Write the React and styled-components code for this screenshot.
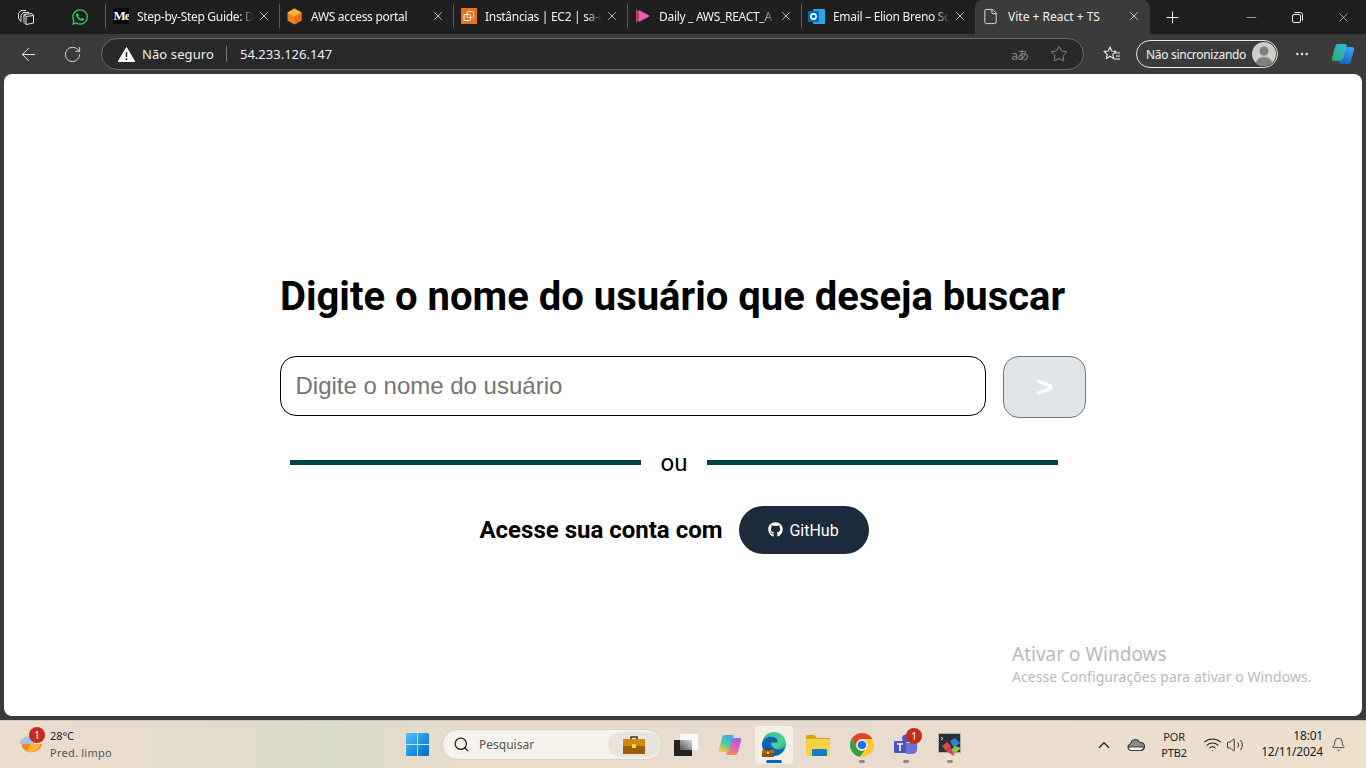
import React from "react";
import styled, { createGlobalStyle } from "styled-components";
import { FaGithub, FaWhatsapp } from "react-icons/fa";
import { ArrowLeft, RotateCw, Star, X, Plus, Minus, File, Search, Bell, ChevronUp, MoreHorizontal, Wifi, Volume2 } from "lucide-react";

const Global = createGlobalStyle`
  html, body { margin: 0; padding: 0; height: 100%; overflow: hidden; }
  #root { height: 100%; }
  * { box-sizing: border-box; }
`;

const UI = `"Noto Sans", "Open Sans", sans-serif`;

const Desktop = styled.div`
  width: 1366px;
  height: 768px;
  display: flex;
  flex-direction: column;
  background: #3b3b3b;
  font-family: ${UI};
  position: relative;
  overflow: hidden;
`;

const TabStrip = styled.div`
  height: 34px;
  background: #1f1f1f;
  display: flex;
  align-items: stretch;
  color: #fff;
`;

const StripIcon = styled.div`
  width: ${(p) => p.$w}px;
  padding-left: ${(p) => p.$pl || 0}px;
  display: flex;
  align-items: center;
  justify-content: center;
  flex: none;
`;

const TabSlot = styled.div`
  width: 174px;
  height: 24px;
  flex: none;
  align-self: center;
  margin-top: -2px;
  display: flex;
  align-items: center;
  padding: 0 8px 0 6px;
  border-left: 1px solid #5a5a5a;
`;

const ActiveTab = styled.div`
  width: 175px;
  flex: none;
  display: flex;
  align-items: center;
  padding: 0 9px 2px 7px;
  background: #3b3b3b;
  border-radius: 8px 8px 0 0;
`;

const Favicon = styled.div`
  width: 17px;
  height: 17px;
  flex: none;
  display: flex;
  align-items: center;
  justify-content: center;
`;

const TabTitle = styled.span`
  flex: 1;
  min-width: 0;
  margin: 0 1px 0 8px;
  font-size: 12px;
  letter-spacing: -0.3px;
  white-space: nowrap;
  overflow: hidden;
  color: #f2f2f2;
  -webkit-mask-image: linear-gradient(to right, #000 86%, transparent 98%);
  mask-image: linear-gradient(to right, #000 86%, transparent 98%);
`;

const ActiveTitle = styled(TabTitle)`
  margin-left: 9px;
  letter-spacing: 0;
  -webkit-mask-image: none;
  mask-image: none;
`;

const MediumMark = styled.div`
  width: 16px;
  height: 16px;
  background: #000;
  color: #fff;
  font: 700 13px/16px "Liberation Serif", serif;
  letter-spacing: -1px;
  overflow: hidden;
  white-space: nowrap;
  padding-left: 1px;
`;

const WindowButtons = styled.div`
  margin-left: auto;
  display: flex;
  align-items: center;
`;

const WindowButton = styled.div`
  width: 46px;
  height: 34px;
  display: flex;
  align-items: center;
  justify-content: center;
`;

const Toolbar = styled.div`
  height: 40px;
  background: #3b3b3b;
  display: flex;
  align-items: center;
  color: #fff;
  padding-left: 6px;
`;

const ToolButton = styled.div`
  width: ${(p) => p.$w || 44}px;
  height: 32px;
  flex: none;
  display: flex;
  align-items: center;
  justify-content: center;
`;

const Address = styled.div`
  width: 983px;
  height: 32px;
  margin-left: 7px;
  flex: none;
  border: 1px solid #6a6a6a;
  border-radius: 16px;
  background: #292929;
  display: flex;
  align-items: center;
  padding: 0 15px 0 16px;
`;

const SecurityText = styled.span`
  margin-left: 7px;
  font-size: 13px;
  letter-spacing: 0.1px;
  color: #f0f0f0;
`;

const AddressDivider = styled.span`
  width: 1px;
  height: 16px;
  margin: 0 13px 0 12px;
  background: #777;
`;

const Url = styled.span`
  font-size: 13px;
  color: #e8f0ff;
  flex: 1;
`;

const Translate = styled.span`
  font-size: 12px;
  color: #8a8a8a;
  margin-right: 22px;
  letter-spacing: -1px;
  font-family: "Noto Sans CJK JP", sans-serif;
`;

const SyncPill = styled.div`
  width: 142px;
  height: 28px;
  flex: none;
  margin-left: -4px;
  border: 1px solid #e6e6e6;
  border-radius: 14px;
  display: flex;
  align-items: center;
  justify-content: space-between;
  padding: 0 1px 0 9px;
  font-size: 12px;
  letter-spacing: -0.3px;
  color: #f2f2f2;
`;

const Avatar = styled.div`
  width: 24px;
  height: 24px;
  border-radius: 50%;
  overflow: hidden;
  background: #cfcdc9;
`;

const Viewport = styled.main`
  flex: none;
  height: 642px;
  margin: 0 4px;
  background: #fff;
  border-radius: 8px;
  display: flex;
  justify-content: center;
  padding-top: 200px;
`;

const SearchColumn = styled.section`
  width: 788px;
  margin-left: -18px;
  display: flex;
  flex-direction: column;
  align-items: center;
  font-family: Roboto, sans-serif;
`;

const Title = styled.h1`
  margin: 0 3px 0 0;
  font: 700 40px/46px Roboto, sans-serif;
  color: #000;
  white-space: nowrap;
`;

const SearchRow = styled.form`
  margin-top: 36px;
  width: 806px;
  align-self: flex-start;
  display: flex;
  align-items: flex-start;
  gap: 17px;
`;

const UserInput = styled.input`
  width: 706px;
  height: 60px;
  border: 1px solid #000;
  border-radius: 16px;
  padding: 0 14.5px;
  font: 24px "Liberation Sans", Arial, sans-serif;
  outline: none;
  background: #fff;
  &::placeholder { color: #757575; opacity: 1; }
`;

const SubmitButton = styled.button`
  width: 83px;
  height: 62px;
  border: 1px solid #767676;
  border-radius: 16px;
  background: #e2e5e7;
  color: #fbfbfb;
  font: 700 30px "Liberation Sans", Arial, sans-serif;
  padding: 0;
`;

const Divider = styled.div`
  margin-top: 28px;
  width: 768px;
  display: flex;
  align-items: center;
  gap: 20px;
  font-size: 24px;
  line-height: 34px;
  color: #000;
`;

const DividerLine = styled.span`
  flex: 1;
  height: 5px;
  margin-bottom: 2px;
  background: #004445;
`;

const LoginRow = styled.div`
  margin-top: 26px;
  display: flex;
  align-items: center;
  gap: 16px;
`;

const LoginLabel = styled.span`
  font-size: 24px;
  font-weight: 700;
  color: #000;
`;

const GithubButton = styled.button`
  width: 130px;
  height: 48px;
  border: none;
  border-radius: 24px;
  background: #1a2b3b;
  color: #fff;
  display: flex;
  align-items: center;
  justify-content: center;
  gap: 6px;
  font: 16px Roboto, sans-serif;
  padding: 0;
  svg { margin-bottom: 2px; }
`;

const Watermark = styled.div`
  position: absolute;
  left: 1012px;
  top: 642px;
  color: #b9b9b9;
  font-size: 14px;
  line-height: 19px;
  letter-spacing: 0.06px;
  white-space: nowrap;
`;

const WatermarkTitle = styled.div`
  font-size: 19px;
  line-height: 25px;
  letter-spacing: 0;
`;

const Taskbar = styled.footer`
  margin-top: 4px;
  flex: 1;
  display: grid;
  grid-template-columns: 395px auto 1fr;
  align-items: center;
  border-top: 1px solid #c8c4b8;
  background: linear-gradient(90deg, #ecdccf 0%, #e6dccd 12%, #dcdccb 24%, #e8dccc 34%, #e9dccf 60%, #ecdfcc 100%);
  color: #1b1b1b;
`;

const Weather = styled.div`
  display: flex;
  align-items: center;
  padding-left: 19px;
  gap: 7px;
`;

const WeatherIcon = styled.div`
  width: 24px;
  height: 28px;
  position: relative;
`;

const Badge = styled.span`
  position: absolute;
  top: ${(p) => p.$top}px;
  right: ${(p) => p.$right}px;
  width: 16px;
  height: 16px;
  border-radius: 50%;
  background: #c42b1c;
  color: #fff;
  font-size: 10px;
  line-height: 16px;
  text-align: center;
`;

const WeatherText = styled.div`
  font-size: 11px;
  line-height: 17px;
  letter-spacing: -0.1px;
  margin-top: -1px;
`;

const Muted = styled.div`
  color: #555;
  letter-spacing: 0.25px;
`;

const Dock = styled.div`
  display: flex;
  align-items: center;
  height: 47px;
`;

const WinButton = styled.div`
  width: 47px;
  display: flex;
  justify-content: center;
  padding-right: 3px;
`;

const SearchBox = styled.div`
  width: 220px;
  height: 31px;
  margin-right: 2px;
  border-radius: 16px;
  border: 1px solid #d6d2c8;
  background: #f6f3ec;
  display: flex;
  align-items: center;
  padding: 0 1px 0 10px;
  font-size: 12px;
  color: #555;
`;

const SearchText = styled.span`
  margin-left: 9px;
  flex: 1;
`;

const SearchChip = styled.div`
  width: 52px;
  height: 25px;
  border-radius: 13px;
  background: #e8e4dc;
  display: flex;
  align-items: center;
  justify-content: center;
`;

const DockItem = styled.div`
  width: 38px;
  height: 38px;
  margin: 0 3px;
  border-radius: 4px;
  position: relative;
  display: flex;
  align-items: center;
  justify-content: center;
  background: ${(p) => (p.$active ? "#f3eee6" : "transparent")};
  &::after {
    content: "";
    display: ${(p) => (p.$mark ? "block" : "none")};
    position: absolute;
    bottom: 1px;
    left: 50%;
    transform: translateX(-50%);
    width: ${(p) => (p.$active ? 16 : 6)}px;
    height: 3px;
    border-radius: 2px;
    background: ${(p) => (p.$active ? "#0067c0" : "#8a8a8a")};
  }
`;

const Tray = styled.div`
  display: flex;
  align-items: center;
  justify-content: flex-end;
  padding-right: 20px;
  font-size: 12px;
  letter-spacing: -0.1px;
`;

const TrayIcon = styled.div`
  display: flex;
  align-items: center;
  margin-left: ${(p) => p.$ml || 0}px;
`;

const Lang = styled.div`
  margin-left: 11px;
  width: 36px;
  text-align: center;
  font-size: 11px;
  line-height: 16px;
`;

const Clock = styled.div`
  margin-left: 17px;
  text-align: right;
  font-size: 12px;
  line-height: 16px;
  letter-spacing: -0.2px;
  margin-top: -2px;
`;

const Aws = () => (
  <svg width="17" height="17" viewBox="0 0 17 17">
    <path d="M8.5 0.5 15.5 4.5V12.5L8.5 16.5 1.5 12.5V4.5Z" fill="#f58220" />
    <path d="M8.5 0.5 15.5 4.5 8.5 8.5 1.5 4.5Z" fill="#fbb040" />
    <path d="M8.5 8.5 15.5 4.5V12.5L8.5 16.5Z" fill="#e8701a" />
  </svg>
);

const Ec2 = () => (
  <svg width="16" height="16" viewBox="0 0 16 16">
    <rect width="16" height="16" fill="#e5761f" />
    <rect x="6" y="3.5" width="6.5" height="6" rx="1" fill="none" stroke="#fbdcc0" />
    <rect x="3" y="6.5" width="6.5" height="6" rx="1" fill="none" stroke="#fff" />
  </svg>
);

const Daily = () => (
  <svg width="16" height="14" viewBox="0 0 16 14">
    <path d="M1 0 9 7 1 14Z" fill="#b83a78" />
    <path d="M4 1 15 7 4 13Z" fill="#e85fa6" />
  </svg>
);

const Outlook = () => (
  <svg width="17" height="17" viewBox="0 0 17 17">
    <rect x="5" y="1" width="12" height="15" rx="1" fill="#28a8ea" />
    <rect x="0" y="3" width="11" height="11" rx="1" fill="#0364b8" />
    <circle cx="5.5" cy="8.5" r="2.6" fill="none" stroke="#fff" strokeWidth="1.6" />
  </svg>
);

const Copilot = ({ id, left, right }) => (
  <svg width="24" height="22" viewBox="0 0 24 22">
    <defs>
      <linearGradient id={`${id}l`} x1="0.7" y1="0" x2="0.3" y2="1">
        {left.map((c, i) => <stop key={c} offset={i / (left.length - 1)} stopColor={c} />)}
      </linearGradient>
      <linearGradient id={`${id}r`} x1="0.7" y1="0" x2="0.3" y2="1">
        {right.map((c, i) => <stop key={c} offset={i / (right.length - 1)} stopColor={c} />)}
      </linearGradient>
    </defs>
    <path d="M17 21h-7c-1.500 0-2-1-1.600-2.200L12 7c.6-2 2-3 4-3h5c1.800 0 2.600 1 2.100 2.500L20 18c-.5 2-1.500 3-3 3Z" fill={`url(#${id}r)`} />
    <path d="M7 1h7c1.500 0 2 1 1.600 2.200L12 15c-.6 2-2 3-4 3H3C1.200 18 .4 17 .9 15.500L4 4C4.500 2 5.500 1 7 1Z" fill={`url(#${id}l)`} opacity=".92" />
  </svg>
);

const Edge = () => (
  <svg width="24" height="25" viewBox="0 0 24 25">
    <defs>
      <linearGradient id="edg" x1="0" y1="0" x2="1" y2="1">
        <stop offset="0" stopColor="#2fc4b0" />
        <stop offset=".6" stopColor="#48d08a" />
        <stop offset="1" stopColor="#1b8fd8" />
      </linearGradient>
    </defs>
    <circle cx="12" cy="12" r="12" fill="url(#edg)" />
    <path d="M0 12C1 6 6 4 11 5c3.500.8 5 3 4.500 5.500H9c0 5 5 8 10 6.500l4-2c-1.500 5.500-6 9-11.500 9C5 24 0 19 0 12Z" fill="#0f63b0" />
    <rect x="0" y="18" width="12" height="7" rx="1" fill="#b96a0c" />
    <rect x="0" y="21" width="12" height="4" fill="#8f4f08" />
    <rect x="4" y="16.500" width="4" height="1.500" fill="none" stroke="#3b3b3b" strokeWidth=".8" />
    <rect x="5" y="20" width="2" height="2" fill="#f5c518" />
  </svg>
);

const Briefcase = () => (
  <svg width="22" height="18" viewBox="0 0 22 18">
    <path d="M8 3V1h6v2" fill="none" stroke="#4a3210" strokeWidth="1.600" />
    <rect x="0" y="3" width="22" height="15" rx="1" fill="#d08a14" />
    <rect x="0" y="10" width="22" height="8" fill="#9c5c08" />
    <rect x="9" y="8" width="4" height="4" fill="#f6d34a" />
  </svg>
);

const Widgets = () => (
  <svg width="24" height="22" viewBox="0 0 24 22">
    <defs>
      <linearGradient id="wdg" x1="0" y1="1" x2="1" y2="0">
        <stop offset="0" stopColor="#555" />
        <stop offset="1" stopColor="#d8d8d8" />
      </linearGradient>
    </defs>
    <rect x="6" y="0" width="18" height="16" fill="#f9f9f9" />
    <rect x="0" y="6" width="18" height="16" fill="#222" />
    <rect x="6" y="6" width="12" height="10" fill="url(#wdg)" />
  </svg>
);

const Folder = () => (
  <svg width="24" height="22" viewBox="0 0 24 22">
    <path d="M0 2a1 1 0 0 1 1-1h7l3 3h12a1 1 0 0 1 1 1v3H0Z" fill="#d9a215" />
    <rect x="0" y="5" width="24" height="17" rx="1" fill="#fad145" />
    <rect x="6" y="15" width="15" height="7" rx="1" fill="#0f7ec4" />
  </svg>
);

const Chrome = () => (
  <svg width="24" height="24" viewBox="0 0 24 24">
    <circle cx="12" cy="12" r="12" fill="#fcc934" />
    <path d="M1.600 6A12 12 0 0 1 22.400 6H12A6 6 0 0 0 6.800 15Z" fill="#db4437" />
    <path d="M1.600 6 6.800 15A6 6 0 0 0 15 17.200L9.800 23.800A12 12 0 0 1 1.600 6Z" fill="#2fa04e" />
    <circle cx="12" cy="12" r="5.500" fill="#fff" />
    <circle cx="12" cy="12" r="4.300" fill="#1a73e8" />
  </svg>
);

const Teams = () => (
  <svg width="24" height="22" viewBox="0 0 24 22">
    <circle cx="19" cy="6" r="3.500" fill="#7b83eb" />
    <circle cx="12" cy="4.500" r="4" fill="#5059c9" />
    <path d="M9 9h14v7a5 5 0 0 1-5 4h-4a5 5 0 0 1-5-5Z" fill="#6a71d6" />
    <rect x="0" y="7" width="12" height="12" rx="1" fill="#4b53bc" />
    <path d="M3 10h6M6 10v7" stroke="#fff" strokeWidth="1.600" />
  </svg>
);

const DevTool = () => (
  <svg width="24" height="24" viewBox="0 0 24 24">
    <rect x=".5" y=".5" width="22" height="19" fill="#2a2f36" stroke="#b0b0b0" />
    <path d="M3 4l2 1.500L3 7" fill="none" stroke="#ddd" />
    <path d="M4 13l5-4 4 4-5 5Z" fill="#e04b3f" />
    <path d="M12 8l5-3 5 5-6 5Z" fill="#2f7fd8" />
    <path d="M13 17l4-4 6 2-8 8Z" fill="#8cc63f" />
    <path d="M8 18l5-4 3 9Z" fill="#d93b6b" />
  </svg>
);

const WeatherGlyph = () => (
  <svg width="24" height="24" viewBox="0 0 24 24">
    <path d="M3 13h20a11 11 0 0 1-20 3Z" fill="#f08a1d" />
    <path d="M8 20a9 9 0 0 0 13-7H11Z" fill="#f7b733" />
    <path d="M1 13a3.500 3.500 0 0 1 3-5 5 5 0 0 1 9 0 3 3 0 0 1 2 5Z" fill="#a9c1e8" />
  </svg>
);

const TrayCloud = () => (
  <svg width="18" height="12" viewBox="0 0 18 12">
    <path d="M4 11.500a3.400 3.400 0 0 1-.5-6.700A5 5 0 0 1 13 3.500a4 4 0 0 1 1 8Z" fill="#8a8a8a" stroke="#222" />
    <path d="M1.500 8h15a3.500 3.500 0 0 1-3 3.500H4A3 3 0 0 1 1.500 8Z" fill="#fafafa" stroke="#222" strokeWidth=".8" />
  </svg>
);

const WindowsLogo = () => (
  <svg width="23" height="23" viewBox="0 0 23 23">
    <defs>
      <linearGradient id="wlg" x1="0" y1="0" x2="1" y2="1">
        <stop offset="0" stopColor="#4cc2ff" />
        <stop offset="1" stopColor="#0067c0" />
      </linearGradient>
    </defs>
    <path d="M0 1.500A1.500 1.500 0 0 1 1.500 0H11v11H0ZM12 0h9.500A1.500 1.500 0 0 1 23 1.500V11H12ZM0 12h11v11H1.500A1.500 1.500 0 0 1 0 21.500ZM12 12h11v9.500a1.500 1.500 0 0 1-1.500 1.500H12Z" fill="url(#wlg)" />
  </svg>
);

const WorkspaceIcon = () => (
  <svg width="18" height="18" viewBox="0 0 18 18" fill="none" stroke="#e8e8e8" strokeWidth="1">
    <path d="M1.500 5.500 4 2.500h5M4 7.500 6 4.500h6" />
    <path d="M1.500 5.500v5l2.500 3M4 7.500v6" />
    <path d="M7 6.500 15 5.500 16.500 7.500V15L9 16.500 7 14.500Z" />
    <path d="M9 8.500 16.500 7.500M9 8.500V16.500M7 6.500 9 8.500" />
  </svg>
);

const ReadingList = () => (
  <svg width="18" height="18" viewBox="0 0 18 18" fill="none" stroke="#f0f0f0" strokeWidth="1.100" strokeLinejoin="round">
    <path d="M7 2 8.700 6 13 6.400 9.800 9.300 10.700 13.600 7 11.300 3.300 13.600 4.200 9.300 1 6.400 5.300 6Z" />
    <path d="M12 8h5M13 11h4M11 14h6" />
  </svg>
);

const RestoreIcon = () => (
  <svg width="11" height="11" viewBox="0 0 11 11" fill="none" stroke="#eee">
    <rect x=".5" y="2.500" width="8" height="8" rx="1.500" />
    <path d="M2.500 .5h6a2 2 0 0 1 2 2v6" />
  </svg>
);

const WarningIcon = () => (
  <svg width="17" height="15" viewBox="0 0 17 15">
    <path d="M8.500 .5 16.700 14.500H.3Z" fill="#fff" stroke="#fff" strokeLinejoin="round" />
    <path d="M8.500 5v5" stroke="#222" strokeWidth="1.500" />
    <circle cx="8.500" cy="12.200" r="1" fill="#222" />
  </svg>
);

const tabs = [
  { title: "Step-by-Step Guide: D", icon: <MediumMark>Me</MediumMark> },
  { title: "AWS access portal", icon: <Aws /> },
  { title: "Instâncias | EC2 | sa-e", icon: <Ec2 /> },
  { title: "Daily _ AWS_REACT_A", icon: <Daily /> },
  { title: "Email – Elion Breno So", icon: <Outlook /> },
];

const App = () => {
  return (
    <Desktop>
      <Global />
      <TabStrip>
        <StripIcon $w={52}><WorkspaceIcon /></StripIcon>
        <StripIcon $w={53} $pl={3}><FaWhatsapp size={18} color="#25d366" /></StripIcon>
        {tabs.map((t) => (
          <TabSlot key={t.title}>
            <Favicon>{t.icon}</Favicon>
            <TabTitle>{t.title}</TabTitle>
            <X size={14} strokeWidth={1.3} color="#eee" />
          </TabSlot>
        ))}
        <ActiveTab>
          <Favicon><File size={17} strokeWidth={1.2} color="#f2f2f2" /></Favicon>
          <ActiveTitle>Vite + React + TS</ActiveTitle>
          <X size={14} strokeWidth={1.3} color="#eee" />
        </ActiveTab>
        <StripIcon $w={44}><Plus size={19} strokeWidth={1.2} color="#fff" /></StripIcon>
        <WindowButtons>
          <WindowButton><Minus size={15} strokeWidth={1} color="#eee" /></WindowButton>
          <WindowButton><RestoreIcon /></WindowButton>
          <WindowButton><X size={15} strokeWidth={1} color="#eee" /></WindowButton>
        </WindowButtons>
      </TabStrip>

      <Toolbar>
        <ToolButton><ArrowLeft size={21} strokeWidth={1.1} color="#eee" /></ToolButton>
        <ToolButton><RotateCw size={19} strokeWidth={1.1} color="#eee" /></ToolButton>
        <Address>
          <WarningIcon />
          <SecurityText>Não seguro</SecurityText>
          <AddressDivider />
          <Url>54.233.126.147</Url>
          <Translate>aあ</Translate>
          <Star size={18} strokeWidth={1.1} color="#999" />
        </Address>
        <ToolButton $w={56}><ReadingList /></ToolButton>
        <SyncPill>
          Não sincronizando
          <Avatar>
            <svg width="24" height="24" viewBox="0 0 24 24">
              <circle cx="12" cy="9" r="4.500" fill="#7f7f7d" />
              <ellipse cx="12" cy="21" rx="8" ry="6" fill="#7f7f7d" />
            </svg>
          </Avatar>
        </SyncPill>
        <ToolButton $w={48}><MoreHorizontal size={16} strokeWidth={1.6} color="#eee" /></ToolButton>
        <ToolButton $w={34}>
          <Copilot id="cpt" left={["#35c1e0", "#2bb673"]} right={["#39a4f0", "#1b5fd0"]} />
        </ToolButton>
      </Toolbar>

      <Viewport>
        <SearchColumn>
          <Title>Digite o nome do usuário que deseja buscar</Title>
          <SearchRow>
            <UserInput placeholder="Digite o nome do usuário" />
            <SubmitButton type="button">&gt;</SubmitButton>
          </SearchRow>
          <Divider>
            <DividerLine />
            ou
            <DividerLine />
          </Divider>
          <LoginRow>
            <LoginLabel>Acesse sua conta com</LoginLabel>
            <GithubButton type="button">
              <FaGithub size={15} />
              GitHub
            </GithubButton>
          </LoginRow>
        </SearchColumn>
      </Viewport>

      <Watermark>
        <WatermarkTitle>Ativar o Windows</WatermarkTitle>
        Acesse Configurações para ativar o Windows.
      </Watermark>

      <Taskbar>
        <Weather>
          <WeatherIcon>
            <WeatherGlyph />
            <Badge $top={-4} $right={-2}>1</Badge>
          </WeatherIcon>
          <WeatherText>
            28°C
            <Muted>Pred. limpo</Muted>
          </WeatherText>
        </Weather>
        <Dock>
          <WinButton><WindowsLogo /></WinButton>
          <SearchBox>
            <Search size={17} color="#222" strokeWidth={1.8} />
            <SearchText>Pesquisar</SearchText>
            <SearchChip><Briefcase /></SearchChip>
          </SearchBox>
          <DockItem><Widgets /></DockItem>
          <DockItem>
            <Copilot id="cpc" left={["#2f9ff0", "#3fc8a0", "#f2c53d"]} right={["#9a5cf0", "#e85fb0", "#f58a5a"]} />
          </DockItem>
          <DockItem $active $mark><Edge /></DockItem>
          <DockItem><Folder /></DockItem>
          <DockItem $mark><Chrome /></DockItem>
          <DockItem $mark>
            <Teams />
            <Badge $top={2} $right={3}>1</Badge>
          </DockItem>
          <DockItem $mark><DevTool /></DockItem>
        </Dock>
        <Tray>
          <TrayIcon><ChevronUp size={18} strokeWidth={1.6} color="#222" /></TrayIcon>
          <TrayIcon $ml={14}><TrayCloud /></TrayIcon>
          <Lang>POR<br />PTB2</Lang>
          <TrayIcon $ml={11}><Wifi size={19} strokeWidth={1.3} color="#222" /></TrayIcon>
          <TrayIcon $ml={4}><Volume2 size={18} strokeWidth={1.2} color="#222" /></TrayIcon>
          <Clock>18:01<br />12/11/2024</Clock>
          <TrayIcon $ml={8}><Bell size={15} strokeWidth={1.2} color="#222" /></TrayIcon>
        </Tray>
      </Taskbar>
    </Desktop>
  );
};

export default App;
